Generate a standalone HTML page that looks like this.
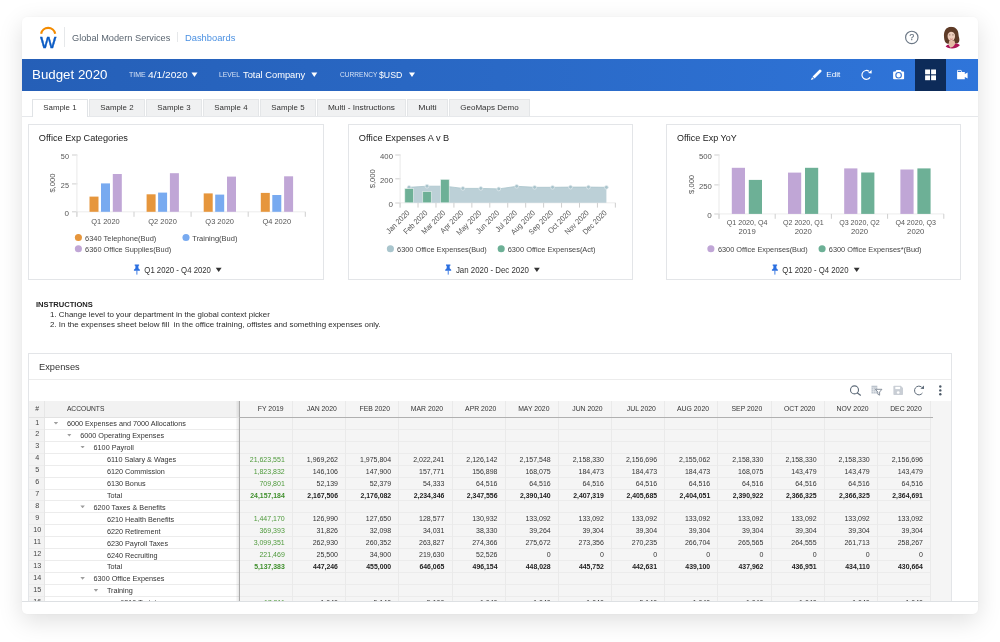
<!DOCTYPE html>
<html lang="en"><head><meta charset="utf-8"><title>Budget 2020 - Dashboards</title>
<style>
html,body{margin:0;padding:0;}
body{width:1000px;height:642px;position:relative;overflow:hidden;background:#fff;font-family:"Liberation Sans",sans-serif;}
#app{position:absolute;left:0;top:0;width:1000px;height:642px;will-change:transform;}
.t{position:absolute;white-space:nowrap;display:block;}
.b{position:absolute;box-sizing:border-box;}
svg{position:absolute;overflow:visible;}
svg text{font-family:"Liberation Sans",sans-serif;}
</style><style>
.grid{position:absolute;overflow:hidden;background:#f5f5f5;}
.grid span,.grid i{position:absolute;white-space:nowrap;display:block;font-style:normal;}
.hr{position:absolute;left:0;top:0;width:100%;}
.hn{top:0;text-align:center;font-size:6.8px;line-height:16.4px;color:#444;}
.ha{top:0;font-size:6.7px;line-height:16.4px;color:#333;}
.hc{top:0;width:44.3px;text-align:right;font-size:6.85px;line-height:16.4px;color:#333;}
.r{position:absolute;left:0;width:100%;height:12px;}
.rn{left:0;top:-0.9px;width:15.6px;text-align:center;font-size:7.2px;line-height:11px;color:#444;}
.an{top:0.8px;font-size:7.25px;line-height:11px;color:#333;}
.n{top:0.5px;width:45.5px;text-align:right;font-size:7px;line-height:11px;color:#333;}
.n.g{color:#4f9a3c;}
.tot .n{font-weight:bold;color:#222;font-size:6.9px;}
.tot .n.g{color:#3f8f2c;}
.ar{top:4.5px;width:4.5px;height:2.7px;background:#9e9e9e;clip-path:polygon(0 0,100% 0,50% 100%);}
.hl{position:absolute;left:0;width:901.4px;height:1px;background:#ececec;}
.vl{position:absolute;top:0;width:1px;height:100%;background:#eaeaea;}
</style></head><body><div id="app">
<div class="b" style="left:22px;top:17px;width:956.3px;height:597px;background:#fff;border-radius:5px;box-shadow:0 7px 24px rgba(0,0,0,0.13),0 0 2px rgba(0,0,0,0.05);"></div>
<div class="b" style="left:63.6px;top:27px;width:1px;height:20px;background:#e6e8ea;"></div>
<div class="b" style="left:177px;top:32px;width:1px;height:10px;background:#e6e8ea;"></div>
<span class="t" style="top:32.76px;font-size:9.5px;line-height:9.5px;color:#5a6570;left:72.15px;transform:scaleX(0.970);transform-origin:0 0;">Global Modern Services</span>
<span class="t" style="top:32.76px;font-size:9.5px;line-height:9.5px;color:#4a90e2;left:185.15px;transform:scaleX(0.982);transform-origin:0 0;">Dashboards</span>
<div class="b" style="left:22px;top:58.5px;width:956.3px;height:32px;background:linear-gradient(90deg,#255fb7 0%,#2a69c6 50%,#2f75da 100%);"></div>
<div class="b" style="left:914.7px;top:58.5px;width:31.7px;height:32px;background:#0d2b59;"></div>
<span class="t" style="top:68.24px;font-size:13.3px;line-height:13.3px;color:#fff;left:32.05px;">Budget 2020</span>
<span class="t" style="top:70.98px;font-size:7.7px;line-height:7.7px;color:#d6e2f5;left:128.55px;transform:scaleX(0.908);transform-origin:0 0;">TIME</span>
<span class="t" style="top:69.96px;font-size:9.5px;line-height:9.5px;color:#fff;left:147.55px;transform:scaleX(1.074);transform-origin:0 0;">4/1/2020</span>
<span class="t" style="top:70.98px;font-size:7.7px;line-height:7.7px;color:#d6e2f5;left:219.25px;transform:scaleX(0.876);transform-origin:0 0;">LEVEL</span>
<span class="t" style="top:69.96px;font-size:9.5px;line-height:9.5px;color:#fff;left:243.45px;transform:scaleX(0.980);transform-origin:0 0;">Total Company</span>
<span class="t" style="top:70.98px;font-size:7.7px;line-height:7.7px;color:#d6e2f5;left:339.55px;transform:scaleX(0.857);transform-origin:0 0;">CURRENCY</span>
<span class="t" style="top:69.96px;font-size:9.5px;line-height:9.5px;color:#fff;left:379.15px;transform:scaleX(0.919);transform-origin:0 0;">$USD</span>
<span class="t" style="top:70.54px;font-size:8.1px;line-height:8.1px;color:#fff;left:826.35px;">Edit</span>
<div class="b" style="left:22px;top:116.2px;width:956.3px;height:1.2px;background:#e6e8eb;"></div>
<div class="b" style="left:32.4px;top:98.8px;width:55.8px;height:18.4px;background:#fff;border:1px solid #e0e3e6;border-bottom:none;"></div>
<span class="t" style="top:104.23px;font-size:8px;line-height:8px;color:#333;left:43.4px;transform:scaleX(0.985);transform-origin:50% 0;">Sample 1</span>
<div class="b" style="left:89.2px;top:98.8px;width:55.8px;height:17.4px;background:#f0f1f2;border:1px solid #e4e6e8;border-bottom:none;"></div>
<span class="t" style="top:104.23px;font-size:8px;line-height:8px;color:#333;left:100.2px;transform:scaleX(0.985);transform-origin:50% 0;">Sample 2</span>
<div class="b" style="left:146px;top:98.8px;width:55.8px;height:17.4px;background:#f0f1f2;border:1px solid #e4e6e8;border-bottom:none;"></div>
<span class="t" style="top:104.23px;font-size:8px;line-height:8px;color:#333;left:157px;transform:scaleX(0.985);transform-origin:50% 0;">Sample 3</span>
<div class="b" style="left:202.8px;top:98.8px;width:55.8px;height:17.4px;background:#f0f1f2;border:1px solid #e4e6e8;border-bottom:none;"></div>
<span class="t" style="top:104.23px;font-size:8px;line-height:8px;color:#333;left:213.8px;transform:scaleX(0.985);transform-origin:50% 0;">Sample 4</span>
<div class="b" style="left:259.6px;top:98.8px;width:56px;height:17.4px;background:#f0f1f2;border:1px solid #e4e6e8;border-bottom:none;"></div>
<span class="t" style="top:104.23px;font-size:8px;line-height:8px;color:#333;left:270.7px;transform:scaleX(0.985);transform-origin:50% 0;">Sample 5</span>
<div class="b" style="left:316.6px;top:98.8px;width:89.4px;height:17.4px;background:#f0f1f2;border:1px solid #e4e6e8;border-bottom:none;"></div>
<span class="t" style="top:104.23px;font-size:8px;line-height:8px;color:#333;left:328.85px;transform:scaleX(1.031);transform-origin:50% 0;">Multi - Instructions</span>
<div class="b" style="left:407px;top:98.8px;width:41.2px;height:17.4px;background:#f0f1f2;border:1px solid #e4e6e8;border-bottom:none;"></div>
<span class="t" style="top:104.23px;font-size:8px;line-height:8px;color:#333;left:419.15px;transform:scaleX(1.089);transform-origin:50% 0;">Multi</span>
<div class="b" style="left:449.2px;top:98.8px;width:80.5px;height:17.4px;background:#f0f1f2;border:1px solid #e4e6e8;border-bottom:none;"></div>
<span class="t" style="top:104.23px;font-size:8px;line-height:8px;color:#333;left:460.33px;">GeoMaps Demo</span>
<div class="b" style="left:28.4px;top:124.4px;width:295.3px;height:155.2px;background:#fff;border:1px solid #e3e5e8;"></div>
<div class="b" style="left:347.5px;top:124.4px;width:285.2px;height:155.2px;background:#fff;border:1px solid #e3e5e8;"></div>
<div class="b" style="left:666.3px;top:124.4px;width:295.2px;height:155.2px;background:#fff;border:1px solid #e3e5e8;"></div>
<span class="t" style="top:301.2px;font-size:7.8px;line-height:7.8px;color:#222;left:35.55px;transform:scaleX(0.973);transform-origin:0 0;font-weight:bold;">INSTRUCTIONS</span>
<span class="t" style="top:310.99px;font-size:8.05px;line-height:8.05px;color:#2a2a2a;left:49.55px;transform:scaleX(0.985);transform-origin:0 0;">1. Change level to your department in the global context picker</span>
<span class="t" style="top:320.99px;font-size:8.05px;line-height:8.05px;color:#2a2a2a;left:49.55px;transform:scaleX(0.987);transform-origin:0 0;white-space:pre;">2. In the expenses sheet below fill  in the office training, offistes and something expenses only.</span>
<div class="b" style="left:28.4px;top:352.6px;width:923.6px;height:249px;background:#fff;border:1px solid #e3e5e8;border-bottom:none;"></div>
<div class="b" style="left:22px;top:600.8px;width:956.3px;height:1px;background:#dde0e3;"></div>
<span class="t" style="top:362.16px;font-size:9.5px;line-height:9.5px;color:#333;left:39.05px;transform:scaleX(0.976);transform-origin:0 0;">Expenses</span>
<div class="b" style="left:29.4px;top:379px;width:921.6px;height:1px;background:#ececec;"></div>
<svg style="left:28.4px;top:124.4px" width="295.3" height="155" viewBox="28.4 124.4 295.3 155">
<text x="39.25" y="141.2" font-size="9.5" fill="#222" textLength="89.1" lengthAdjust="spacingAndGlyphs">Office Exp Categories</text>
<line x1="72.4" y1="155.4" x2="77.8" y2="155.4" stroke="#cfcfcf" stroke-width="1"/>
<text x="69.35" y="159.2" font-size="7.5" fill="#555" text-anchor="end" textLength="8.1" lengthAdjust="spacingAndGlyphs">50</text>
<line x1="72.4" y1="184.3" x2="77.8" y2="184.3" stroke="#cfcfcf" stroke-width="1"/>
<text x="69.35" y="188.1" font-size="7.5" fill="#555" text-anchor="end" textLength="8.1" lengthAdjust="spacingAndGlyphs">25</text>
<line x1="72.4" y1="212.2" x2="77.8" y2="212.2" stroke="#cfcfcf" stroke-width="1"/>
<text x="69.35" y="216" font-size="7.5" fill="#555" text-anchor="end" textLength="4.5" lengthAdjust="spacingAndGlyphs">0</text>
<line x1="77.3" y1="155.4" x2="77.3" y2="217.2" stroke="#e9e9e9" stroke-width="1"/>
<line x1="77.3" y1="212.2" x2="305.7" y2="212.2" stroke="#ececec" stroke-width="1"/>
<line x1="77.3" y1="212.2" x2="77.3" y2="217.2" stroke="#cfcfcf" stroke-width="1"/>
<line x1="134.4" y1="212.2" x2="134.4" y2="217.2" stroke="#cfcfcf" stroke-width="1"/>
<line x1="191.5" y1="212.2" x2="191.5" y2="217.2" stroke="#cfcfcf" stroke-width="1"/>
<line x1="248.6" y1="212.2" x2="248.6" y2="217.2" stroke="#cfcfcf" stroke-width="1"/>
<line x1="305.7" y1="212.2" x2="305.7" y2="217.2" stroke="#cfcfcf" stroke-width="1"/>
<text x="55.6" y="183.5" font-size="7.6" fill="#555" text-anchor="middle" transform="rotate(-90 55.6 183.5)">$,000</text>
<rect x="89.9" y="197" width="9" height="15.2" fill="#e6963c"/>
<rect x="101.4" y="183.8" width="9" height="28.4" fill="#78aaf0"/>
<rect x="113.2" y="174.4" width="9" height="37.8" fill="#c0a6d6"/>
<text x="105.85" y="224.1" font-size="7.8" fill="#555" text-anchor="middle" textLength="28.6" lengthAdjust="spacingAndGlyphs">Q1 2020</text>
<rect x="147" y="194.7" width="9" height="17.5" fill="#e6963c"/>
<rect x="158.5" y="193" width="9" height="19.2" fill="#78aaf0"/>
<rect x="170.3" y="173.6" width="9" height="38.6" fill="#c0a6d6"/>
<text x="162.95" y="224.1" font-size="7.8" fill="#555" text-anchor="middle" textLength="28.6" lengthAdjust="spacingAndGlyphs">Q2 2020</text>
<rect x="204.1" y="193.8" width="9" height="18.4" fill="#e6963c"/>
<rect x="215.6" y="195" width="9" height="17.2" fill="#78aaf0"/>
<rect x="227.4" y="177" width="9" height="35.2" fill="#c0a6d6"/>
<text x="220.05" y="224.1" font-size="7.8" fill="#555" text-anchor="middle" textLength="28.6" lengthAdjust="spacingAndGlyphs">Q3 2020</text>
<rect x="261.2" y="193.3" width="9" height="18.9" fill="#e6963c"/>
<rect x="272.7" y="195.4" width="9" height="16.8" fill="#78aaf0"/>
<rect x="284.5" y="176.7" width="9" height="35.5" fill="#c0a6d6"/>
<text x="277.15" y="224.1" font-size="7.8" fill="#555" text-anchor="middle" textLength="28.6" lengthAdjust="spacingAndGlyphs">Q4 2020</text>
<circle cx="78.8" cy="237.9" r="3.55" fill="#e6963c"/>
<text x="85.45" y="241.2" font-size="7.6" fill="#444" textLength="71.3" lengthAdjust="spacingAndGlyphs">6340 Telephone(Bud)</text>
<circle cx="186.4" cy="237.9" r="3.55" fill="#78aaf0"/>
<text x="192.75" y="241.2" font-size="7.6" fill="#444" textLength="45.1" lengthAdjust="spacingAndGlyphs">Training(Bud)</text>
<circle cx="78.8" cy="249.2" r="3.55" fill="#c0a6d6"/>
<text x="85.45" y="252.5" font-size="7.6" fill="#444" textLength="86.2" lengthAdjust="spacingAndGlyphs">6360 Office Supplies(Bud)</text>
<g fill="#2b6fe0"><path d="M135.1 264.8 h4.4 v1.3 h-0.7 v2.6 l1.5 1.5 v1 h-6 v-1 l1.5 -1.5 v-2.6 h-0.7 z"/><rect x="136.85" y="271" width="0.9" height="4.0"/></g>
<text x="144.75" y="273.5" font-size="8.8" fill="#333" textLength="66.6" lengthAdjust="spacingAndGlyphs">Q1 2020 - Q4 2020</text>
<path d="M216.2 268.05 L222 268.05 L219.1 272.35 z" fill="#333"/>
</svg>
<svg style="left:347.5px;top:124.4px" width="285.2" height="155" viewBox="347.5 124.4 285.2 155">
<text x="358.25" y="141.2" font-size="9.5" fill="#222" textLength="90.5" lengthAdjust="spacingAndGlyphs">Office Expenses A v B</text>
<line x1="394.8" y1="155.4" x2="400.1" y2="155.4" stroke="#cfcfcf" stroke-width="1"/>
<text x="392.45" y="159.2" font-size="7.5" fill="#555" text-anchor="end" textLength="12.9" lengthAdjust="spacingAndGlyphs">400</text>
<line x1="394.8" y1="179.2" x2="400.1" y2="179.2" stroke="#cfcfcf" stroke-width="1"/>
<text x="392.45" y="183" font-size="7.5" fill="#555" text-anchor="end" textLength="12.9" lengthAdjust="spacingAndGlyphs">200</text>
<line x1="394.8" y1="203.4" x2="400.1" y2="203.4" stroke="#cfcfcf" stroke-width="1"/>
<text x="392.45" y="207.2" font-size="7.5" fill="#555" text-anchor="end" textLength="4.5" lengthAdjust="spacingAndGlyphs">0</text>
<line x1="399.6" y1="155.4" x2="399.6" y2="208" stroke="#e9e9e9" stroke-width="1"/>
<line x1="399.6" y1="203.2" x2="614.88" y2="203.2" stroke="#ececec" stroke-width="1"/>
<text x="374.5" y="179.2" font-size="7.6" fill="#555" text-anchor="middle" transform="rotate(-90 374.5 179.2)">$,000</text>
<path d="M408.57 187.7 L426.51 186.6 L444.45 186.6 L462.39 188.8 L480.33 188.8 L498.27 189.3 L516.21 186.7 L534.15 187.7 L552.09 187.7 L570.03 187.5 L587.97 187.5 L605.91 187.7 L605.91 203.2 L408.57 203.2 z" fill="#bcd0d7"/>
<polyline points="408.57,187.7 426.51,186.6 444.45,186.6 462.39,188.8 480.33,188.8 498.27,189.3 516.21,186.7 534.15,187.7 552.09,187.7 570.03,187.5 587.97,187.5 605.91,187.7" fill="none" stroke="#a9c4cc" stroke-width="0.8"/>
<circle cx="408.57" cy="187.7" r="1.9" fill="#a9c4cc" stroke="#e6eef0" stroke-width="0.7"/>
<circle cx="426.51" cy="186.6" r="1.9" fill="#a9c4cc" stroke="#e6eef0" stroke-width="0.7"/>
<circle cx="444.45" cy="186.6" r="1.9" fill="#a9c4cc" stroke="#e6eef0" stroke-width="0.7"/>
<circle cx="462.39" cy="188.8" r="1.9" fill="#a9c4cc" stroke="#e6eef0" stroke-width="0.7"/>
<circle cx="480.33" cy="188.8" r="1.9" fill="#a9c4cc" stroke="#e6eef0" stroke-width="0.7"/>
<circle cx="498.27" cy="189.3" r="1.9" fill="#a9c4cc" stroke="#e6eef0" stroke-width="0.7"/>
<circle cx="516.21" cy="186.7" r="1.9" fill="#a9c4cc" stroke="#e6eef0" stroke-width="0.7"/>
<circle cx="534.15" cy="187.7" r="1.9" fill="#a9c4cc" stroke="#e6eef0" stroke-width="0.7"/>
<circle cx="552.09" cy="187.7" r="1.9" fill="#a9c4cc" stroke="#e6eef0" stroke-width="0.7"/>
<circle cx="570.03" cy="187.5" r="1.9" fill="#a9c4cc" stroke="#e6eef0" stroke-width="0.7"/>
<circle cx="587.97" cy="187.5" r="1.9" fill="#a9c4cc" stroke="#e6eef0" stroke-width="0.7"/>
<circle cx="605.91" cy="187.7" r="1.9" fill="#a9c4cc" stroke="#e6eef0" stroke-width="0.7"/>
<rect x="404.32" y="189" width="8.5" height="14.2" fill="#6db096" stroke="#e8f1ee" stroke-width="0.6"/>
<rect x="422.26" y="192" width="8.5" height="11.2" fill="#6db096" stroke="#e8f1ee" stroke-width="0.6"/>
<rect x="440.2" y="179.8" width="8.5" height="23.4" fill="#6db096" stroke="#e8f1ee" stroke-width="0.6"/>
<line x1="399.6" y1="203.2" x2="399.6" y2="208" stroke="#cfcfcf" stroke-width="1"/>
<text x="409.57" y="213.8" font-size="7.8" fill="#555" text-anchor="end" textLength="29.53" lengthAdjust="spacingAndGlyphs" transform="rotate(-45 409.57 213.8)">Jan 2020</text>
<line x1="417.54" y1="203.2" x2="417.54" y2="208" stroke="#cfcfcf" stroke-width="1"/>
<text x="427.51" y="213.8" font-size="7.8" fill="#555" text-anchor="end" textLength="30.32" lengthAdjust="spacingAndGlyphs" transform="rotate(-45 427.51 213.8)">Feb 2020</text>
<line x1="435.48" y1="203.2" x2="435.48" y2="208" stroke="#cfcfcf" stroke-width="1"/>
<text x="445.45" y="213.8" font-size="7.8" fill="#555" text-anchor="end" textLength="30.32" lengthAdjust="spacingAndGlyphs" transform="rotate(-45 445.45 213.8)">Mar 2020</text>
<line x1="453.42" y1="203.2" x2="453.42" y2="208" stroke="#cfcfcf" stroke-width="1"/>
<text x="463.39" y="213.8" font-size="7.8" fill="#555" text-anchor="end" textLength="29.13" lengthAdjust="spacingAndGlyphs" transform="rotate(-45 463.39 213.8)">Apr 2020</text>
<line x1="471.36" y1="203.2" x2="471.36" y2="208" stroke="#cfcfcf" stroke-width="1"/>
<text x="481.33" y="213.8" font-size="7.8" fill="#555" text-anchor="end" textLength="31.51" lengthAdjust="spacingAndGlyphs" transform="rotate(-45 481.33 213.8)">May 2020</text>
<line x1="489.3" y1="203.2" x2="489.3" y2="208" stroke="#cfcfcf" stroke-width="1"/>
<text x="499.27" y="213.8" font-size="7.8" fill="#555" text-anchor="end" textLength="29.53" lengthAdjust="spacingAndGlyphs" transform="rotate(-45 499.27 213.8)">Jun 2020</text>
<line x1="507.24" y1="203.2" x2="507.24" y2="208" stroke="#cfcfcf" stroke-width="1"/>
<text x="517.21" y="213.8" font-size="7.8" fill="#555" text-anchor="end" textLength="27.13" lengthAdjust="spacingAndGlyphs" transform="rotate(-45 517.21 213.8)">Jul 2020</text>
<line x1="525.18" y1="203.2" x2="525.18" y2="208" stroke="#cfcfcf" stroke-width="1"/>
<text x="535.15" y="213.8" font-size="7.8" fill="#555" text-anchor="end" textLength="30.73" lengthAdjust="spacingAndGlyphs" transform="rotate(-45 535.15 213.8)">Aug 2020</text>
<line x1="543.12" y1="203.2" x2="543.12" y2="208" stroke="#cfcfcf" stroke-width="1"/>
<text x="553.09" y="213.8" font-size="7.8" fill="#555" text-anchor="end" textLength="30.73" lengthAdjust="spacingAndGlyphs" transform="rotate(-45 553.09 213.8)">Sep 2020</text>
<line x1="561.06" y1="203.2" x2="561.06" y2="208" stroke="#cfcfcf" stroke-width="1"/>
<text x="571.03" y="213.8" font-size="7.8" fill="#555" text-anchor="end" textLength="29.12" lengthAdjust="spacingAndGlyphs" transform="rotate(-45 571.03 213.8)">Oct 2020</text>
<line x1="579" y1="203.2" x2="579" y2="208" stroke="#cfcfcf" stroke-width="1"/>
<text x="588.97" y="213.8" font-size="7.8" fill="#555" text-anchor="end" textLength="30.72" lengthAdjust="spacingAndGlyphs" transform="rotate(-45 588.97 213.8)">Nov 2020</text>
<line x1="596.94" y1="203.2" x2="596.94" y2="208" stroke="#cfcfcf" stroke-width="1"/>
<text x="606.91" y="213.8" font-size="7.8" fill="#555" text-anchor="end" textLength="30.72" lengthAdjust="spacingAndGlyphs" transform="rotate(-45 606.91 213.8)">Dec 2020</text>
<line x1="614.88" y1="203.2" x2="614.88" y2="208" stroke="#cfcfcf" stroke-width="1"/>
<circle cx="389.9" cy="249.2" r="3.55" fill="#a9c5cd"/>
<text x="396.55" y="252.5" font-size="7.6" fill="#444" textLength="89.7" lengthAdjust="spacingAndGlyphs">6300 Office Expenses(Bud)</text>
<circle cx="500.7" cy="249.2" r="3.55" fill="#6db096"/>
<text x="507.15" y="252.5" font-size="7.6" fill="#444" textLength="87.9" lengthAdjust="spacingAndGlyphs">6300 Office Expenses(Act)</text>
<g fill="#2b6fe0"><path d="M445.5 264.8 h4.4 v1.3 h-0.7 v2.6 l1.5 1.5 v1 h-6 v-1 l1.5 -1.5 v-2.6 h-0.7 z"/><rect x="447.25" y="271" width="0.9" height="4.0"/></g>
<text x="455.45" y="273.5" font-size="8.8" fill="#333" textLength="73" lengthAdjust="spacingAndGlyphs">Jan 2020 - Dec 2020</text>
<path d="M533.5 268.05 L539.3 268.05 L536.4 272.35 z" fill="#333"/>
</svg>
<svg style="left:666.3px;top:124.4px" width="295.2" height="155" viewBox="666.3 124.4 295.2 155">
<text x="677.35" y="141.2" font-size="9.5" fill="#222" textLength="59.6" lengthAdjust="spacingAndGlyphs">Office Exp YoY</text>
<line x1="714.6" y1="155.4" x2="719.8" y2="155.4" stroke="#cfcfcf" stroke-width="1"/>
<text x="712.15" y="159.2" font-size="7.5" fill="#555" text-anchor="end" textLength="12.9" lengthAdjust="spacingAndGlyphs">500</text>
<line x1="714.6" y1="185.3" x2="719.8" y2="185.3" stroke="#cfcfcf" stroke-width="1"/>
<text x="712.15" y="189.1" font-size="7.5" fill="#555" text-anchor="end" textLength="12.9" lengthAdjust="spacingAndGlyphs">250</text>
<line x1="714.6" y1="214.4" x2="719.8" y2="214.4" stroke="#cfcfcf" stroke-width="1"/>
<text x="712.15" y="218.2" font-size="7.5" fill="#555" text-anchor="end" textLength="4.5" lengthAdjust="spacingAndGlyphs">0</text>
<line x1="719.3" y1="155.4" x2="719.3" y2="219.2" stroke="#e9e9e9" stroke-width="1"/>
<line x1="719.3" y1="214.3" x2="944.1" y2="214.3" stroke="#ececec" stroke-width="1"/>
<line x1="719.3" y1="214.3" x2="719.3" y2="219.2" stroke="#cfcfcf" stroke-width="1"/>
<line x1="775.5" y1="214.3" x2="775.5" y2="219.2" stroke="#cfcfcf" stroke-width="1"/>
<line x1="831.7" y1="214.3" x2="831.7" y2="219.2" stroke="#cfcfcf" stroke-width="1"/>
<line x1="887.9" y1="214.3" x2="887.9" y2="219.2" stroke="#cfcfcf" stroke-width="1"/>
<line x1="944.1" y1="214.3" x2="944.1" y2="219.2" stroke="#cfcfcf" stroke-width="1"/>
<text x="694.3" y="184.8" font-size="7.6" fill="#555" text-anchor="middle" transform="rotate(-90 694.3 184.8)">$,000</text>
<rect x="732.1" y="168.2" width="13.2" height="46.1" fill="#c0a6d6"/>
<rect x="749.1" y="180.3" width="13.2" height="34" fill="#6db096"/>
<text x="747.4" y="225.9" font-size="7.8" fill="#555" text-anchor="middle" textLength="40.6" lengthAdjust="spacingAndGlyphs">Q1 2020, Q4</text>
<text x="747.4" y="234.7" font-size="7.8" fill="#555" text-anchor="middle" textLength="17.2" lengthAdjust="spacingAndGlyphs">2019</text>
<rect x="788.3" y="173" width="13.2" height="41.3" fill="#c0a6d6"/>
<rect x="805.3" y="168.2" width="13.2" height="46.1" fill="#6db096"/>
<text x="803.6" y="225.9" font-size="7.8" fill="#555" text-anchor="middle" textLength="40.6" lengthAdjust="spacingAndGlyphs">Q2 2020, Q1</text>
<text x="803.6" y="234.7" font-size="7.8" fill="#555" text-anchor="middle" textLength="17.2" lengthAdjust="spacingAndGlyphs">2020</text>
<rect x="844.5" y="168.8" width="13.2" height="45.5" fill="#c0a6d6"/>
<rect x="861.5" y="172.9" width="13.2" height="41.4" fill="#6db096"/>
<text x="859.8" y="225.9" font-size="7.8" fill="#555" text-anchor="middle" textLength="40.6" lengthAdjust="spacingAndGlyphs">Q3 2020, Q2</text>
<text x="859.8" y="234.7" font-size="7.8" fill="#555" text-anchor="middle" textLength="17.2" lengthAdjust="spacingAndGlyphs">2020</text>
<rect x="900.7" y="169.9" width="13.2" height="44.4" fill="#c0a6d6"/>
<rect x="917.7" y="168.8" width="13.2" height="45.5" fill="#6db096"/>
<text x="916" y="225.9" font-size="7.8" fill="#555" text-anchor="middle" textLength="40.6" lengthAdjust="spacingAndGlyphs">Q4 2020, Q3</text>
<text x="916" y="234.7" font-size="7.8" fill="#555" text-anchor="middle" textLength="17.2" lengthAdjust="spacingAndGlyphs">2020</text>
<circle cx="711.2" cy="249.2" r="3.55" fill="#c0a6d6"/>
<text x="718.25" y="252.5" font-size="7.6" fill="#444" textLength="89.7" lengthAdjust="spacingAndGlyphs">6300 Office Expenses(Bud)</text>
<circle cx="822.4" cy="249.2" r="3.55" fill="#6db096"/>
<text x="829.15" y="252.5" font-size="7.6" fill="#444" textLength="92.7" lengthAdjust="spacingAndGlyphs">6300 Office Expenses*(Bud)</text>
<g fill="#2b6fe0"><path d="M773 264.8 h4.4 v1.3 h-0.7 v2.6 l1.5 1.5 v1 h-6 v-1 l1.5 -1.5 v-2.6 h-0.7 z"/><rect x="774.75" y="271" width="0.9" height="4.0"/></g>
<text x="782.55" y="273.5" font-size="8.8" fill="#333" textLength="66.2" lengthAdjust="spacingAndGlyphs">Q1 2020 - Q4 2020</text>
<path d="M854.1 268.05 L859.9 268.05 L857 272.35 z" fill="#333"/>
</svg>
<div class="grid" style="left:29.4px;top:401.3px;width:921.6px;height:199.7px">
<div class="b" style="left:0;top:0;width:209.9px;height:16.1px;background:#f2f2f2"></div>
<div class="b" style="left:0;top:16.1px;width:15.6px;height:183.6px;background:#f3f3f3"></div>
<div class="b" style="left:15.6px;top:16.1px;width:194.3px;height:183.6px;background:#fff"></div>
<div class="hr" style="height:16.1px">
<span class="hn" style="left:0;width:15.6px">#</span>
<span class="ha" style="left:37.5px">ACCOUNTS</span>
<span class="hc" style="left:209.9px">FY 2019</span>
<span class="hc" style="left:263.08px">JAN 2020</span>
<span class="hc" style="left:316.26px">FEB 2020</span>
<span class="hc" style="left:369.44px">MAR 2020</span>
<span class="hc" style="left:422.62px">APR 2020</span>
<span class="hc" style="left:475.8px">MAY 2020</span>
<span class="hc" style="left:528.98px">JUN 2020</span>
<span class="hc" style="left:582.16px">JUL 2020</span>
<span class="hc" style="left:635.34px">AUG 2020</span>
<span class="hc" style="left:688.52px">SEP 2020</span>
<span class="hc" style="left:741.7px">OCT 2020</span>
<span class="hc" style="left:794.88px">NOV 2020</span>
<span class="hc" style="left:848.06px">DEC 2020</span>
</div>
<div class="r" style="top:16.1px">
<span class="rn">1</span>
<i class="ar" style="left:24.3px"></i>
<span class="an" style="left:37.5px">6000 Expenses and 7000 Allocations</span>
</div>
<div class="r" style="top:28.04px">
<span class="rn">2</span>
<i class="ar" style="left:37.63px"></i>
<span class="an" style="left:50.83px">6000 Operating Expenses</span>
</div>
<div class="r" style="top:39.98px">
<span class="rn">3</span>
<i class="ar" style="left:50.96px"></i>
<span class="an" style="left:64.16px">6100 Payroll</span>
</div>
<div class="r" style="top:51.92px">
<span class="rn">4</span>
<span class="an" style="left:77.49px">6110 Salary &amp; Wages</span>
<span class="n g" style="left:209.9px">21,623,551</span>
<span class="n" style="left:263.08px">1,969,262</span>
<span class="n" style="left:316.26px">1,975,804</span>
<span class="n" style="left:369.44px">2,022,241</span>
<span class="n" style="left:422.62px">2,126,142</span>
<span class="n" style="left:475.8px">2,157,548</span>
<span class="n" style="left:528.98px">2,158,330</span>
<span class="n" style="left:582.16px">2,156,696</span>
<span class="n" style="left:635.34px">2,155,062</span>
<span class="n" style="left:688.52px">2,158,330</span>
<span class="n" style="left:741.7px">2,158,330</span>
<span class="n" style="left:794.88px">2,158,330</span>
<span class="n" style="left:848.06px">2,156,696</span>
</div>
<div class="r" style="top:63.86px">
<span class="rn">5</span>
<span class="an" style="left:77.49px">6120 Commission</span>
<span class="n g" style="left:209.9px">1,823,832</span>
<span class="n" style="left:263.08px">146,106</span>
<span class="n" style="left:316.26px">147,900</span>
<span class="n" style="left:369.44px">157,771</span>
<span class="n" style="left:422.62px">156,898</span>
<span class="n" style="left:475.8px">168,075</span>
<span class="n" style="left:528.98px">184,473</span>
<span class="n" style="left:582.16px">184,473</span>
<span class="n" style="left:635.34px">184,473</span>
<span class="n" style="left:688.52px">168,075</span>
<span class="n" style="left:741.7px">143,479</span>
<span class="n" style="left:794.88px">143,479</span>
<span class="n" style="left:848.06px">143,479</span>
</div>
<div class="r" style="top:75.8px">
<span class="rn">6</span>
<span class="an" style="left:77.49px">6130 Bonus</span>
<span class="n g" style="left:209.9px">709,801</span>
<span class="n" style="left:263.08px">52,139</span>
<span class="n" style="left:316.26px">52,379</span>
<span class="n" style="left:369.44px">54,333</span>
<span class="n" style="left:422.62px">64,516</span>
<span class="n" style="left:475.8px">64,516</span>
<span class="n" style="left:528.98px">64,516</span>
<span class="n" style="left:582.16px">64,516</span>
<span class="n" style="left:635.34px">64,516</span>
<span class="n" style="left:688.52px">64,516</span>
<span class="n" style="left:741.7px">64,516</span>
<span class="n" style="left:794.88px">64,516</span>
<span class="n" style="left:848.06px">64,516</span>
</div>
<div class="r tot" style="top:87.74px">
<span class="rn">7</span>
<span class="an" style="left:77.49px">Total</span>
<span class="n g" style="left:209.9px">24,157,184</span>
<span class="n" style="left:263.08px">2,167,506</span>
<span class="n" style="left:316.26px">2,176,082</span>
<span class="n" style="left:369.44px">2,234,346</span>
<span class="n" style="left:422.62px">2,347,556</span>
<span class="n" style="left:475.8px">2,390,140</span>
<span class="n" style="left:528.98px">2,407,319</span>
<span class="n" style="left:582.16px">2,405,685</span>
<span class="n" style="left:635.34px">2,404,051</span>
<span class="n" style="left:688.52px">2,390,922</span>
<span class="n" style="left:741.7px">2,366,325</span>
<span class="n" style="left:794.88px">2,366,325</span>
<span class="n" style="left:848.06px">2,364,691</span>
</div>
<div class="r" style="top:99.68px">
<span class="rn">8</span>
<i class="ar" style="left:50.96px"></i>
<span class="an" style="left:64.16px">6200 Taxes &amp; Benefits</span>
</div>
<div class="r" style="top:111.62px">
<span class="rn">9</span>
<span class="an" style="left:77.49px">6210 Health Benefits</span>
<span class="n g" style="left:209.9px">1,447,170</span>
<span class="n" style="left:263.08px">126,990</span>
<span class="n" style="left:316.26px">127,650</span>
<span class="n" style="left:369.44px">128,577</span>
<span class="n" style="left:422.62px">130,932</span>
<span class="n" style="left:475.8px">133,092</span>
<span class="n" style="left:528.98px">133,092</span>
<span class="n" style="left:582.16px">133,092</span>
<span class="n" style="left:635.34px">133,092</span>
<span class="n" style="left:688.52px">133,092</span>
<span class="n" style="left:741.7px">133,092</span>
<span class="n" style="left:794.88px">133,092</span>
<span class="n" style="left:848.06px">133,092</span>
</div>
<div class="r" style="top:123.56px">
<span class="rn">10</span>
<span class="an" style="left:77.49px">6220 Retirement</span>
<span class="n g" style="left:209.9px">369,393</span>
<span class="n" style="left:263.08px">31,826</span>
<span class="n" style="left:316.26px">32,098</span>
<span class="n" style="left:369.44px">34,031</span>
<span class="n" style="left:422.62px">38,330</span>
<span class="n" style="left:475.8px">39,264</span>
<span class="n" style="left:528.98px">39,304</span>
<span class="n" style="left:582.16px">39,304</span>
<span class="n" style="left:635.34px">39,304</span>
<span class="n" style="left:688.52px">39,304</span>
<span class="n" style="left:741.7px">39,304</span>
<span class="n" style="left:794.88px">39,304</span>
<span class="n" style="left:848.06px">39,304</span>
</div>
<div class="r" style="top:135.5px">
<span class="rn">11</span>
<span class="an" style="left:77.49px">6230 Payroll Taxes</span>
<span class="n g" style="left:209.9px">3,099,351</span>
<span class="n" style="left:263.08px">262,930</span>
<span class="n" style="left:316.26px">260,352</span>
<span class="n" style="left:369.44px">263,827</span>
<span class="n" style="left:422.62px">274,366</span>
<span class="n" style="left:475.8px">275,672</span>
<span class="n" style="left:528.98px">273,356</span>
<span class="n" style="left:582.16px">270,235</span>
<span class="n" style="left:635.34px">266,704</span>
<span class="n" style="left:688.52px">265,565</span>
<span class="n" style="left:741.7px">264,555</span>
<span class="n" style="left:794.88px">261,713</span>
<span class="n" style="left:848.06px">258,267</span>
</div>
<div class="r" style="top:147.44px">
<span class="rn">12</span>
<span class="an" style="left:77.49px">6240 Recruiting</span>
<span class="n g" style="left:209.9px">221,469</span>
<span class="n" style="left:263.08px">25,500</span>
<span class="n" style="left:316.26px">34,900</span>
<span class="n" style="left:369.44px">219,630</span>
<span class="n" style="left:422.62px">52,526</span>
<span class="n" style="left:475.8px">0</span>
<span class="n" style="left:528.98px">0</span>
<span class="n" style="left:582.16px">0</span>
<span class="n" style="left:635.34px">0</span>
<span class="n" style="left:688.52px">0</span>
<span class="n" style="left:741.7px">0</span>
<span class="n" style="left:794.88px">0</span>
<span class="n" style="left:848.06px">0</span>
</div>
<div class="r tot" style="top:159.38px">
<span class="rn">13</span>
<span class="an" style="left:77.49px">Total</span>
<span class="n g" style="left:209.9px">5,137,383</span>
<span class="n" style="left:263.08px">447,246</span>
<span class="n" style="left:316.26px">455,000</span>
<span class="n" style="left:369.44px">646,065</span>
<span class="n" style="left:422.62px">496,154</span>
<span class="n" style="left:475.8px">448,028</span>
<span class="n" style="left:528.98px">445,752</span>
<span class="n" style="left:582.16px">442,631</span>
<span class="n" style="left:635.34px">439,100</span>
<span class="n" style="left:688.52px">437,962</span>
<span class="n" style="left:741.7px">436,951</span>
<span class="n" style="left:794.88px">434,110</span>
<span class="n" style="left:848.06px">430,664</span>
</div>
<div class="r" style="top:171.32px">
<span class="rn">14</span>
<i class="ar" style="left:50.96px"></i>
<span class="an" style="left:64.16px">6300 Office Expenses</span>
</div>
<div class="r" style="top:183.26px">
<span class="rn">15</span>
<i class="ar" style="left:64.29px"></i>
<span class="an" style="left:77.49px">Training</span>
</div>
<div class="r" style="top:195.2px">
<span class="rn">16</span>
<span class="an" style="left:90.82px">6310 Training</span>
<span class="n g" style="left:209.9px">17,311</span>
<span class="n" style="left:263.08px">1,040</span>
<span class="n" style="left:316.26px">5,140</span>
<span class="n" style="left:369.44px">5,100</span>
<span class="n" style="left:422.62px">1,040</span>
<span class="n" style="left:475.8px">1,040</span>
<span class="n" style="left:528.98px">1,040</span>
<span class="n" style="left:582.16px">5,140</span>
<span class="n" style="left:635.34px">1,040</span>
<span class="n" style="left:688.52px">1,040</span>
<span class="n" style="left:741.7px">1,040</span>
<span class="n" style="left:794.88px">1,040</span>
<span class="n" style="left:848.06px">1,040</span>
</div>
<div class="hl" style="top:27.54px"></div>
<div class="hl" style="top:39.48px"></div>
<div class="hl" style="top:51.42px"></div>
<div class="hl" style="top:63.36px"></div>
<div class="hl" style="top:75.3px"></div>
<div class="hl" style="top:87.24px"></div>
<div class="hl" style="top:99.18px"></div>
<div class="hl" style="top:111.12px"></div>
<div class="hl" style="top:123.06px"></div>
<div class="hl" style="top:135px"></div>
<div class="hl" style="top:146.94px"></div>
<div class="hl" style="top:158.88px"></div>
<div class="hl" style="top:170.82px"></div>
<div class="hl" style="top:182.76px"></div>
<div class="hl" style="top:194.7px"></div>
<div class="hl" style="top:206.64px"></div>
<div class="vl" style="left:262.58px"></div>
<div class="vl" style="left:315.76px"></div>
<div class="vl" style="left:368.94px"></div>
<div class="vl" style="left:422.12px"></div>
<div class="vl" style="left:475.3px"></div>
<div class="vl" style="left:528.48px"></div>
<div class="vl" style="left:581.66px"></div>
<div class="vl" style="left:634.84px"></div>
<div class="vl" style="left:688.02px"></div>
<div class="vl" style="left:741.2px"></div>
<div class="vl" style="left:794.38px"></div>
<div class="vl" style="left:847.56px"></div>
<div class="vl" style="left:900.74px"></div>
<div class="vl" style="left:15.1px;background:#e6e6e6"></div>
<div class="b" style="left:207px;top:0;width:2.4px;height:199.7px;background:linear-gradient(90deg,rgba(0,0,0,0.02),rgba(0,0,0,0.10))"></div>
<div class="b" style="left:209.4px;top:0;width:1px;height:199.7px;background:#aaa"></div>
<div class="b" style="left:0;top:15.6px;width:209.9px;height:1px;background:#e2e2e2"></div>
<div class="b" style="left:209.9px;top:15.6px;width:693.7px;height:1px;background:#b0b0b0"></div>
</div>
<svg style="left:0;top:0" width="1000" height="642" viewBox="0 0 1000 642">
<path d="M41.1 33.8 A7.17 7.17 0 0 1 55.2 33.8" fill="none" stroke="#f38b00" stroke-width="2.2"/>
<text x="48.15" y="47.75" font-size="19.4" fill="#0a5bc4" text-anchor="middle" textLength="16" lengthAdjust="spacingAndGlyphs" stroke="#0a5bc4" stroke-width="0.35">w</text>
<circle cx="911.8" cy="37.4" r="6.2" fill="none" stroke="#6b7785" stroke-width="1.15"/>
<text x="911.8" y="40.4" font-size="8.4" fill="#6b7785" stroke="#6b7785" stroke-width="0.25" text-anchor="middle">?</text>
<defs><clipPath id="av"><circle cx="952" cy="37.5" r="11"/></clipPath></defs>
<g clip-path="url(#av)"><rect x="941" y="26.5" width="22" height="22" fill="#fff"/><path d="M944.0 37 C943.4 30.6 946.6 26.7 951 26.8 C955.6 26.8 958.4 30 958.5 34.4 C958.6 37 959.8 38.6 959.3 40.8 C959 42.6 957.6 43.8 955.8 43.6 L947.6 43.8 C945.2 43.2 944.2 40.6 944.0 37 Z" fill="#5e3b27"/><path d="M944.8 49 C945.2 46.6 946.6 45.2 948.6 44.6 L950.6 47.6 L955 43.4 C958.6 43.2 960.6 44.8 961.4 49 Z" fill="#ad1457"/><path d="M949.2 40.6 L954.4 40.6 L955.2 43.6 C954.2 46.2 952.4 47.6 950.6 47.6 C949.6 46.6 948.8 45.4 948.6 44.4 Z" fill="#e3bba5"/><ellipse cx="951.3" cy="35.9" rx="3.75" ry="5.1" fill="#edcdbb"/><path d="M947.3 35.2 C947.4 31.2 950 29.2 952.4 29.6 C954.8 29.9 956 32 955.7 35.4 C954.8 33.2 953 31.6 950.8 31.7 C949 31.9 947.9 33.4 947.3 35.2 Z" fill="#5e3b27"/><path d="M948.9 34.9 h1.5 M952.2 34.9 h1.5" stroke="#4a3226" stroke-width="0.55"/><path d="M949.9 38.9 Q951.4 39.8 952.9 38.9" fill="none" stroke="#c46a66" stroke-width="0.75"/></g>
<g fill="#fff"><path d="M812.6 76.6 L819.4 69.8 Q820.2 69.2 820.9 69.9 L821.3 70.3 Q822 71 821.3 71.8 L814.5 78.6 Z"/><path d="M812.1 77.2 L813.9 79.0 L810.9 80.1 Z"/></g>
<path d="M869.14 71.39 A4.45 4.45 0 1 0 870.05 77.45" fill="none" stroke="#fff" stroke-width="1.15"/><path d="M871.6 69.9 L871.6 73.4 L868 73 Z" fill="#fff"/>
<path d="M893.1 72.2 a0.8 0.8 0 0 1 0.8 -0.8 h1.6 l0.9 -1.4 h4.4 l0.9 1.4 h1.6 a0.8 0.8 0 0 1 0.8 0.8 v6.2 a0.8 0.8 0 0 1 -0.8 0.8 h-9.4 a0.8 0.8 0 0 1 -0.8 -0.8 z" fill="#fff"/>
<circle cx="898.6" cy="75.3" r="2.75" fill="none" stroke="#2e72d6" stroke-width="1.1"/>
<rect x="925.1" y="69.5" width="4.9" height="4.8" fill="#fff"/>
<rect x="931.1" y="69.5" width="4.9" height="4.8" fill="#fff"/>
<rect x="925.1" y="75.4" width="4.9" height="4.8" fill="#fff"/>
<rect x="931.1" y="75.4" width="4.9" height="4.8" fill="#fff"/>
<path d="M957.1 71.9 h7.7 v2.2 l2.8 -1.5 v6 l-2.8 -1.5 v2.1 h-7.7 z" fill="#fff"/>
<path d="M957.5 71.9 v-1.5 h3.6 l0.6 1.5" fill="none" stroke="#fff" stroke-width="0.8"/>
<path d="M191.5 72.4 L197.5 72.4 L194.5 77 z" fill="#fff"/>
<path d="M311.3 72.4 L317.3 72.4 L314.3 77 z" fill="#fff"/>
<path d="M409 72.4 L415 72.4 L412 77 z" fill="#fff"/>
<circle cx="854.5" cy="389.9" r="4" fill="none" stroke="#5e6b79" stroke-width="1.1"/>
<path d="M857.4 392.9 L860.5 395.2" stroke="#5e6b79" stroke-width="1.2" stroke-linecap="round"/>
<rect x="871.5" y="385.7" width="5.8" height="7.8" fill="#bcc4cd"/>
<g stroke="#fff" stroke-width="0.45" opacity="0.8"><path d="M871.5 387.7 h5.8 M871.5 389.7 h5.8 M871.5 391.6 h5.8 M873.5 387.7 v5.8 M875.4 387.7 v5.8"/></g>
<path d="M875.4 389.3 H881.9 L879.6 392 V395.2 L877.8 394.2 V392 Z" fill="#fff" stroke="#7a8592" stroke-width="0.9" stroke-linejoin="round"/>
<path d="M893.4 386.5 a0.8 0.8 0 0 1 0.8 -0.8 h6.6 l2.2 2.2 v6.4 a0.8 0.8 0 0 1 -0.8 0.8 h-8 a0.8 0.8 0 0 1 -0.8 -0.8 z" fill="#c9ced5"/>
<rect x="895.3" y="386.9" width="4.8" height="2.2" fill="#fff"/>
<circle cx="898.2" cy="392.5" r="1.35" fill="#fff"/>
<path d="M921.58 387.07 A4.35 4.35 0 1 0 922.46 393" fill="none" stroke="#5e6b79" stroke-width="1"/><path d="M924 385.6 L924 389.1 L920.4 388.7 Z" fill="#5e6b79"/>
<circle cx="940.3" cy="386.5" r="1.2" fill="#4d5a68"/>
<circle cx="940.3" cy="390.4" r="1.2" fill="#4d5a68"/>
<circle cx="940.3" cy="394.3" r="1.2" fill="#4d5a68"/>
</svg>
</div></body></html>
